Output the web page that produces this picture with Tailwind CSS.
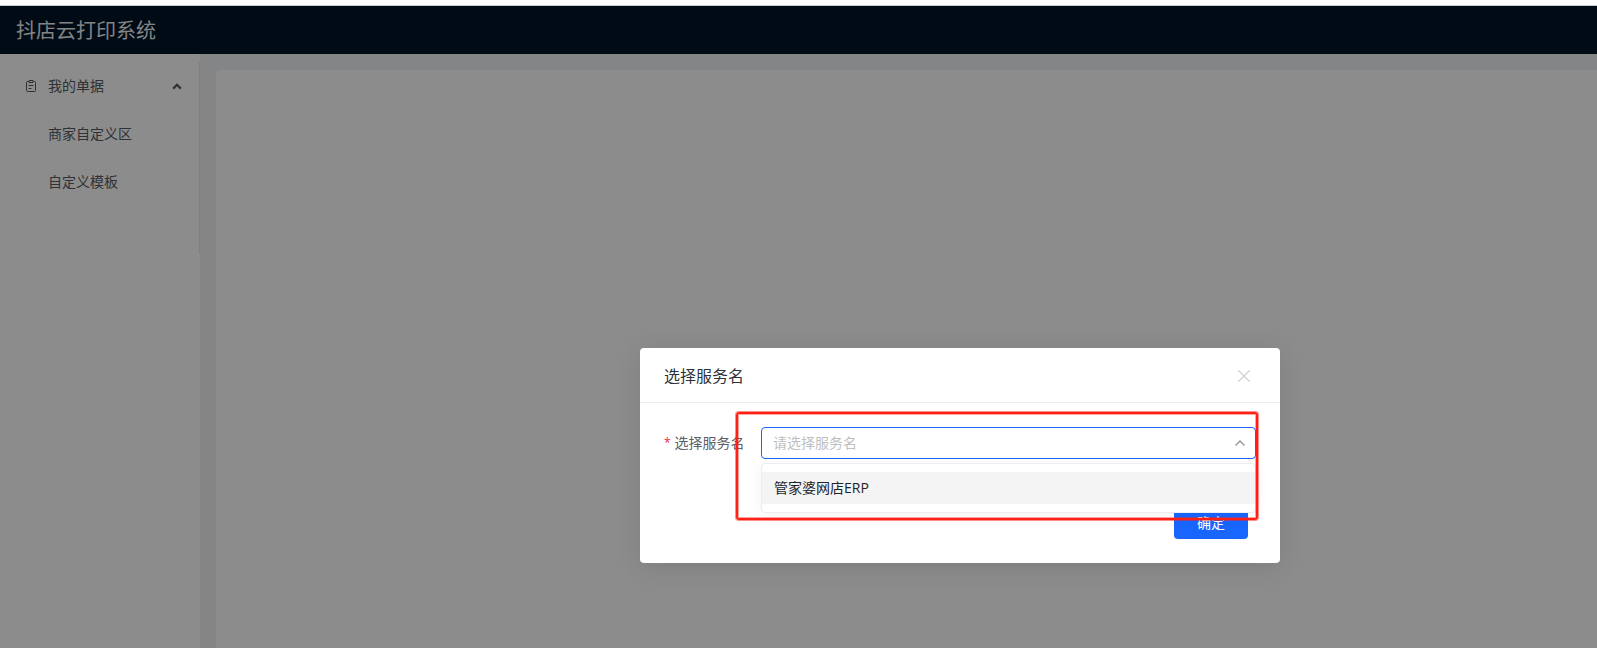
<!DOCTYPE html>
<html lang="zh-CN">
<head>
<meta charset="utf-8">
<title>抖店云打印系统</title>
<script src="https://cdn.jsdelivr.net/npm/@tailwindcss/browser@4"></script>
</head>
<body class="flex h-screen flex-col overflow-hidden bg-white font-['Open_Sans','Noto_Sans_CJK_SC',sans-serif] text-sm text-[#262b33]">
  <div class="h-[6px] shrink-0 border-b border-[#c5cfd0] bg-white"></div>
  <div class="relative flex min-h-0 flex-1 flex-col">
    <header class="flex h-12 shrink-0 items-center bg-[#001529] px-4 pt-[2px]">
      <h1 class="text-xl text-white/95">抖店云打印系统</h1>
    </header>
    <div class="flex min-h-0 flex-1 bg-[#f0f2f5]">
      <nav class="w-[200px] shrink-0 bg-white pt-2">
        <div class="h-48 border-r border-[#e5e6eb] text-[#565a62]">
          <button type="button" aria-expanded="true" class="flex h-12 w-full items-center pr-[17px] pl-[25px]">
            <svg class="mr-[11px] size-3" viewBox="0 0 12 12" fill="none" stroke="currentColor" aria-hidden="true">
              <path d="M4 1.5H2.5a1 1 0 0 0-1 1v8a1 1 0 0 0 1 1h7a1 1 0 0 0 1-1v-8a1 1 0 0 0-1-1H8M4 .5h4v2H4zM3.5 5.5h5M3.5 8.5h3"/>
            </svg>
            <span>我的单据</span>
            <svg class="ml-auto h-2 w-[10px]" viewBox="0 0 10 8" fill="none" stroke="currentColor" stroke-width="2.2" aria-hidden="true">
              <path d="M1.2 6.6 5 2.8l3.8 3.8"/>
            </svg>
          </button>
          <a href="#" class="flex h-12 items-center pl-12">商家自定义区</a>
          <a href="#" class="flex h-12 items-center pl-12">自定义模板</a>
        </div>
      </nav>
      <main class="mt-4 ml-4 flex-1 rounded-tl bg-white"></main>
    </div>

    <!-- Mask and dialog -->
    <div class="absolute inset-0 bg-black/45 pt-[342px] pl-[640px]">
      <section role="dialog" aria-labelledby="dialog-title" class="w-full max-w-[640px] rounded bg-white shadow-[0_4px_24px_rgba(0,0,0,0.1)]">
        <div class="flex h-[55px] items-center justify-between border-b border-[#ebebeb] px-6 pt-px">
          <h2 id="dialog-title" class="text-base text-[#2d3138]">选择服务名</h2>
          <button type="button" aria-label="关闭" class="mr-[6px] text-[#d0d1d3]">
            <svg class="size-3" viewBox="0 0 12 12" fill="none" stroke="currentColor" stroke-width="1.3"><path d="m.5.5 11 11M11.5.5l-11 11"/></svg>
          </button>
        </div>
        <form class="p-6">
          <div class="relative flex h-8 items-center">
            <label for="service" class="flex w-[97px] shrink-0 items-center whitespace-nowrap text-[#5d6067]"><span class="mr-1 text-xs text-[#f5222d]">*</span>选择服务名</label>
            <div class="relative h-8 flex-1">
              <select id="service" class="h-8 w-full appearance-none rounded border border-[#1966ff] bg-white px-[11px] text-sm text-[#bfbfbf] outline-none">
                <option>请选择服务名</option>
              </select>
              <svg class="pointer-events-none absolute top-3 right-[11px] h-2 w-[10px] text-[#939393]" viewBox="0 0 10 8" fill="none" stroke="currentColor" stroke-width="1.3" aria-hidden="true"><path d="M.5 6.5 5 2l4.5 4.5"/></svg>
              <ul role="listbox" class="absolute inset-x-0 top-9 z-10 rounded border border-[#ededed] bg-white py-2 shadow-[0_2px_16px_rgba(0,0,0,0.05)]">
                <li role="option" aria-selected="false" class="flex h-8 items-center bg-[#f4f4f4] px-3 text-[#202329]">管家婆网店ERP</li>
              </ul>
            </div>
            <!-- Highlight frame around the field and its list -->
            <div class="pointer-events-none absolute -top-[15px] -right-[2px] left-[72px] z-20 h-[108px] rounded-[3px] border-2 border-[#ff2015] shadow-[0_0_0_1px_rgba(255,32,21,0.5),inset_0_0_0_1px_rgba(255,32,21,0.4)]"></div>
          </div>
          <div class="mt-12 flex justify-end pr-2">
            <button type="button" class="h-8 w-[74px] rounded bg-[#1966ff] text-white">确定</button>
          </div>
        </form>
      </section>
    </div>
  </div>
</body>
</html>
